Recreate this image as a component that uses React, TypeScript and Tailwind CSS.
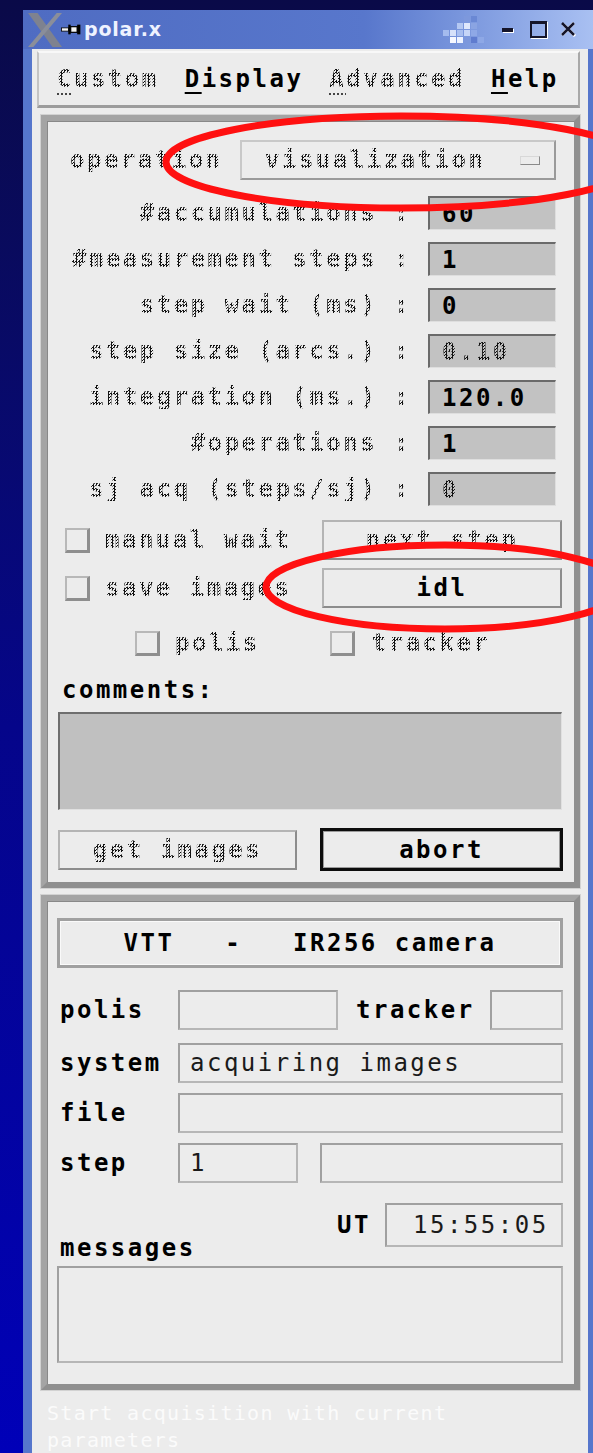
import React from "react";

const MONO = "font-['DejaVu_Sans_Mono','Liberation_Mono',monospace] text-[24px] leading-none tracking-[2.5px]";
const STIP =
  "font-bold bg-[repeating-conic-gradient(#111111_0_25%,transparent_0_50%)] [background-size:3px_3px] bg-clip-text text-transparent";

function Stip({ children, className = "" }: { children: React.ReactNode; className?: string }) {
  return <span className={`${STIP} ${className}`}>{children}</span>;
}

function XLogo() {
  return (
    <svg width="34" height="34" viewBox="0 0 32 32">
      <polygon points="0,0 9,0 32,32 23,32" fill="#7e828f" />
      <polygon points="27,0 32,0 5,32 0,32" fill="#8a8e9a" />
    </svg>
  );
}

function Pin() {
  return (
    <svg width="21" height="13" viewBox="0 0 26 14">
      <rect x="0.5" y="5" width="9" height="4" fill="#f4f4f4" stroke="#000" strokeWidth="1" />
      <rect x="9" y="1" width="3" height="12" fill="#000" />
      <rect x="12" y="3.5" width="8" height="7" fill="#f4f4f4" stroke="#000" strokeWidth="1.5" />
      <rect x="20" y="1" width="4" height="12" fill="#000" />
    </svg>
  );
}

const DITHER: [number, number, string][] = [
  [3, 0, "#7d98dc"],
  [4, 0, "#6a88d4"],
  [2, 1, "#b4c8f2"],
  [3, 1, "#dfe8fc"],
  [4, 1, "#8aa4e2"],
  [0, 2, "#a4bbee"],
  [1, 2, "#d6e1fa"],
  [2, 2, "#a9bff0"],
  [3, 2, "#c6d5f7"],
  [4, 2, "#8ea8e6"],
  [1, 3, "#f6f8ff"],
  [2, 3, "#eef3ff"],
  [3, 3, "#7c97dc"],
  [4, 3, "#5f7ccf"],
  [5, 3, "#8ea8e6"],
];

function Dither() {
  return (
    <svg width="42" height="28" viewBox="0 0 42 28">
      {DITHER.map(([c, r, col], i) => (
        <rect key={i} x={c * 7} y={r * 7} width="6" height="6" fill={col} />
      ))}
    </svg>
  );
}

function TitleButtons() {
  return (
    <div className="flex items-center">
      <div className="w-[11px] h-[4px] bg-[#15152a] shadow-[1px_1px_0_#ffffff]" />
      <div className="ml-[17px] w-[17px] h-[17px] border-2 border-[#15152a] border-t-[3px] shadow-[1px_1px_0_#ffffff]" />
      <svg className="ml-[13px]" width="17" height="15" viewBox="0 0 17 15">
        <path d="M3 2 L15 14 M14 1 L2 13" stroke="#ffffff" strokeWidth="3" />
        <path d="M2 1 L14 13 M14 1 L2 13" stroke="#15152a" strokeWidth="2.5" />
      </svg>
    </div>
  );
}

function Check() {
  return (
    <div className="w-[25px] h-[25px] shrink-0 bg-[#ececec] border-2 border-t-[#b8b8b8] border-l-[#b8b8b8] border-b-[3px] border-r-[3px] border-b-[#8e8e8e] border-r-[#8e8e8e]" />
  );
}

function Field({ label, value, live }: { label: string; value: string; live: boolean }) {
  return (
    <div className="flex items-center justify-end gap-[17px] pr-[18px] h-[34px]">
      <Stip className={`${MONO} whitespace-pre`}>{label}</Stip>
      <div className="w-[128px] h-[34px] bg-[#c2c2c2] border-t-2 border-l-2 border-t-[#6a6a6a] border-l-[#6a6a6a] border-b border-r border-b-[#dedede] border-r-[#dedede] flex items-center pl-[12px]">
        {live ? (
          <span className={`${MONO} font-bold tracking-[1.5px] text-black`}>{value}</span>
        ) : (
          <Stip className={`${MONO} tracking-[1.5px]`}>{value}</Stip>
        )}
      </div>
    </div>
  );
}

const FIELDS: { label: string; value: string; live: boolean }[] = [
  { label: "#accumulations :", value: "60", live: true },
  { label: "#measurement steps :", value: "1", live: true },
  { label: "step wait (ms) :", value: "0", live: true },
  { label: "step size (arcs.) :", value: "0.10", live: false },
  { label: "integration (ms.) :", value: "120.0", live: true },
  { label: "#operations :", value: "1", live: true },
  { label: "sj acq (steps/sj) :", value: "0", live: false },
];

const BTN =
  "h-[40px] bg-[#ececec] border-2 border-t-[#b4b4b4] border-l-[#b4b4b4] border-b-[#8c8c8c] border-r-[#8c8c8c] flex items-center justify-center";
const PANEL =
  "ml-[9px] mr-[8px] border-[6px] border-[#a4a4a4] border-b-[#8f8f8f] border-r-[#8f8f8f] shadow-[0_0_0_1px_#d2d2d2,inset_1px_1px_0_#888888] flex flex-col";
const OUT = "bg-[#ececec] border-2 border-t-[#a0a0a0] border-l-[#a0a0a0] border-b-[#b6b6b6] border-r-[#b6b6b6] flex items-center";
const LBL = `${MONO} font-bold text-black`;

export default function App() {
  return (
    <div className="relative w-[593px] h-[1453px] overflow-hidden bg-gradient-to-b from-[#0a0a48] via-[#05058a] to-[#0000b8] pt-[10px] pl-[23px]">
      <div className="w-[570px] h-[1443px] flex flex-col">
        {/* title bar */}
        <div className="h-[39px] shrink-0 flex items-center bg-gradient-to-r from-[#4f6cc2] via-[#5877cc] via-60% to-[#a9c0f2] pl-[5px] pr-[16px]">
          <XLogo />
          <div className="-ml-[1px]">
            <Pin />
          </div>
          <span className="ml-[2px] font-['DejaVu_Sans',sans-serif] font-bold text-[19px] tracking-[0.8px] text-[#eef2ff]">
            polar.x
          </span>
          <div className="ml-auto">
            <Dither />
          </div>
          <div className="ml-[17px]">
            <TitleButtons />
          </div>
        </div>

        {/* client area */}
        <div className="flex-1 bg-[#ececec] border-l-[9px] border-r-[5px] border-[#5676cc] flex flex-col">
          {/* menu bar */}
          <div className="mt-[2px] ml-[5px] mr-[8px] h-[57px] border-2 border-t-[#f8f8f8] border-l-[#c4c4c4] border-b-[3px] border-b-[#9c9c9c] border-r-[#a8a8a8] flex items-center pl-[18px] gap-[26px]">
            <Stip className={MONO}>
              <span className="underline decoration-dotted decoration-[#444] decoration-2 underline-offset-[6px]">C</span>ustom
            </Stip>
            <span className={LBL}>
              <span className="underline decoration-2 underline-offset-[5px]">D</span>isplay
            </span>
            <Stip className={MONO}>
              <span className="underline decoration-dotted decoration-[#444] decoration-2 underline-offset-[6px]">A</span>dvanced
            </Stip>
            <span className={LBL}>
              <span className="underline decoration-2 underline-offset-[5px]">H</span>elp
            </span>
          </div>

          {/* acquisition parameters */}
          <div className={`${PANEL} mt-[7px] h-[773px]`}>
            <div className="flex items-center h-[40px] mt-[19px] pl-[23px] pr-[18px]">
              <Stip className={MONO}>operation</Stip>
              <div className="ml-auto w-[316px] h-[40px] bg-[#ececec] border-2 border-t-[#c8c8c8] border-l-[#c8c8c8] border-b-[#9a9a9a] border-r-[#9a9a9a] flex items-center pl-[23px] pr-[14px]">
                <Stip className={MONO}>visualization</Stip>
                <div className="ml-auto w-[20px] h-[9px] border border-t-[#d8d8d8] border-l-[#d8d8d8] border-b-[#8a8a8a] border-r-[#8a8a8a] bg-[#ececec]" />
              </div>
            </div>

            <div className="mt-[16px] flex flex-col gap-[12px]">
              {FIELDS.map((f) => (
                <Field key={f.label} {...f} />
              ))}
            </div>

            <div className="mt-[14px] flex items-center h-[40px] pl-[18px] pr-[12px]">
              <Check />
              <Stip className={`${MONO} ml-[15px]`}>manual wait</Stip>
              <div className={`${BTN} ml-auto w-[240px]`}>
                <Stip className={MONO}>next step</Stip>
              </div>
            </div>
            <div className="mt-[8px] flex items-center h-[40px] pl-[18px] pr-[12px]">
              <Check />
              <Stip className={`${MONO} ml-[15px]`}>save images</Stip>
              <div className={`${BTN} ml-auto w-[240px]`}>
                <span className={`${LBL} tracking-[1px]`}>idl</span>
              </div>
            </div>

            <div className="mt-[20px] flex items-center h-[30px] pl-[88px]">
              <Check />
              <Stip className={`${MONO} ml-[15px]`}>polis</Stip>
              <div className="ml-[70px]">
                <Check />
              </div>
              <Stip className={`${MONO} ml-[17px]`}>tracker</Stip>
            </div>

            <div className="mt-[17px] h-[30px] pl-[15px] flex items-center">
              <span className={LBL}>comments:</span>
            </div>
            <div className="mt-[7px] ml-[11px] w-[504px] h-[98px] bg-[#c0c0c0] border-t-2 border-l-2 border-t-[#6e6e6e] border-l-[#6e6e6e] border-b border-r border-b-[#e0e0e0] border-r-[#e0e0e0]" />

            <div className="mt-[18px] flex items-center h-[43px] pl-[11px]">
              <div className={`${BTN} w-[239px] h-[38px]`}>
                <Stip className={MONO}>get images</Stip>
              </div>
              <div className="ml-[23px] w-[243px] h-[43px] bg-[#ececec] border-[3px] border-[#0c0c0c] shadow-[inset_0_0_0_1px_#9a9a9a] flex items-center justify-center">
                <span className={`${LBL} tracking-[1px]`}>abort</span>
              </div>
            </div>
          </div>

          {/* camera status */}
          <div className={`${PANEL} mt-[7px] h-[495px]`}>
            <div className="mt-[17px] ml-[10px] w-[506px] h-[50px] border-[3px] border-[#a0a0a0] shadow-[inset_0_0_0_1px_#fafafa] flex items-center justify-center">
              <span className={`${LBL} whitespace-pre`}>VTT   -   IR256 camera</span>
            </div>

            <div className="mt-[22px] flex items-center h-[40px] pl-[13px] pr-[11px]">
              <span className={`${LBL} w-[118px]`}>polis</span>
              <div className={`${OUT} w-[160px] h-[40px]`} />
              <span className={`${LBL} ml-[18px]`}>tracker</span>
              <div className={`${OUT} ml-auto w-[73px] h-[40px]`} />
            </div>

            <div className="mt-[13px] flex items-center h-[40px] pl-[13px]">
              <span className={`${LBL} w-[118px]`}>system</span>
              <div className={`${OUT} w-[385px] h-[40px] pl-[10px]`}>
                <span className={`${MONO} tracking-[2.3px] text-[#1a1a1a]`}>acquiring images</span>
              </div>
            </div>

            <div className="mt-[10px] flex items-center h-[40px] pl-[13px]">
              <span className={`${LBL} w-[118px]`}>file</span>
              <div className={`${OUT} w-[385px] h-[40px]`} />
            </div>

            <div className="mt-[10px] flex items-center h-[40px] pl-[13px]">
              <span className={`${LBL} w-[118px]`}>step</span>
              <div className={`${OUT} w-[120px] h-[40px] pl-[10px]`}>
                <span className={`${MONO} text-[#1a1a1a]`}>1</span>
              </div>
              <div className={`${OUT} ml-[22px] w-[243px] h-[40px]`} />
            </div>

            <div className="mt-[20px] flex items-end h-[44px] pl-[13px] pr-[11px]">
              <span className={`${LBL} -mb-[13px]`}>messages</span>
              <div className="ml-auto flex items-center">
                <span className={LBL}>UT</span>
                <div className={`${OUT} ml-[14px] w-[178px] h-[44px] pl-[26px]`}>
                  <span className={`${MONO} tracking-[1.5px] text-[#1a1a1a]`}>15:55:05</span>
                </div>
              </div>
            </div>

            <div className={`${OUT} mt-[19px] ml-[10px] w-[506px] h-[97px]`} />
          </div>

          {/* status line */}
          <div className="pt-[10px] pl-[15px] font-['DejaVu_Sans_Mono','Liberation_Mono',monospace] text-[20px] leading-[27px] tracking-[1.3px] text-[#fbfbfb]">
            Start acquisition with current
            <br />
            parameters
          </div>
        </div>
      </div>

      {/* red marker rings */}
      <svg className="absolute inset-0 pointer-events-none" width="593" height="1453" viewBox="0 0 593 1453">
        <ellipse cx="401" cy="162" rx="235" ry="46" fill="none" stroke="#ff1010" strokeWidth="7" />
        <ellipse cx="445" cy="587" rx="179" ry="42" fill="none" stroke="#ff1010" strokeWidth="7" />
      </svg>
    </div>
  );
}
